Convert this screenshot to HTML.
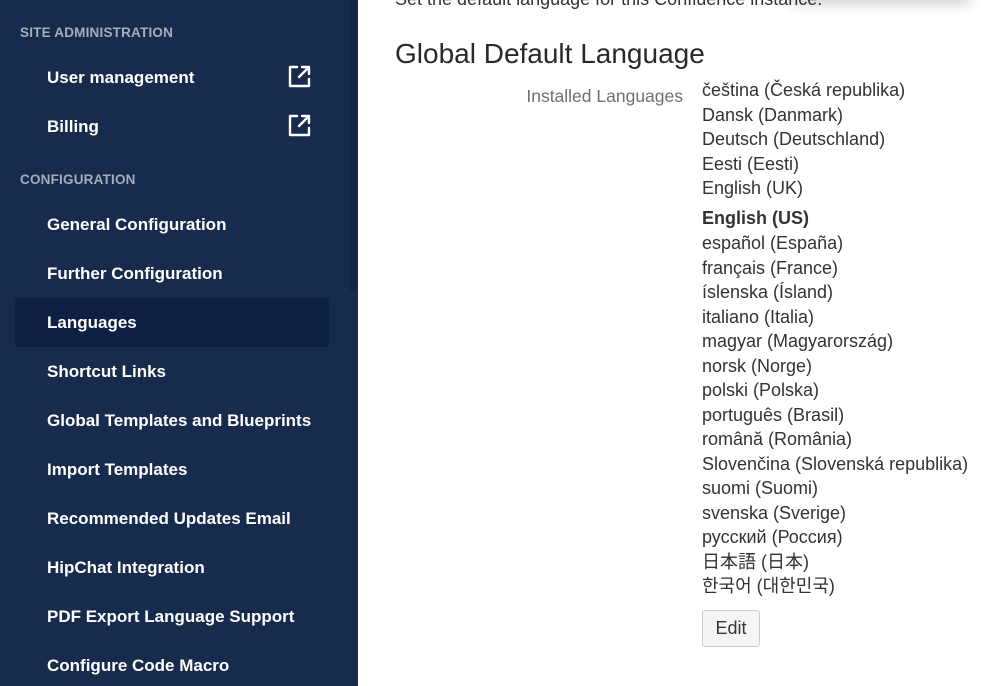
<!DOCTYPE html>
<html><head><meta charset="utf-8"><style>
*{margin:0;padding:0;box-sizing:border-box}
body{width:999px;height:686px;overflow:hidden;background:#fff;font-family:"Liberation Sans","Noto Sans CJK KR",sans-serif;position:relative}
#side{position:absolute;left:0;top:0;width:358px;height:686px;background:#172b4d}
.thumb{position:absolute;left:349px;top:-5px;width:8px;height:297px;background:#132648;border-radius:4px}
.h{position:absolute;left:20px;font-size:13.5px;font-weight:bold;color:#a5adba;letter-spacing:.2px;line-height:16px}
.it{position:absolute;left:47px;font-size:17px;font-weight:bold;color:#fff;line-height:20px;transform:translateY(-9px)}
.sel{position:absolute;left:15px;top:298px;width:314px;height:49px;background:#0e1f44;border-radius:3px}
.ext{position:absolute;left:288px;width:23px;height:23px}
.main{position:absolute;left:395px;color:#333}
.lang{position:absolute;left:702px;font-size:18px;color:#333;line-height:20px;white-space:nowrap}
</style></head><body>
<div id="side">
<div class="thumb"></div>
<div class="sel"></div>
<div class="h" style="top:25px">SITE ADMINISTRATION</div>
<div class="it" style="top:77px">User management</div>
<svg class="ext" style="top:65px" viewBox="0 0 23 23" fill="none" stroke="#fff" stroke-width="2.4" stroke-linecap="round" stroke-linejoin="round"><path d="M9 2H2v19h19v-7"/><path d="M11 12L20 3M14 2h7v7"/></svg>
<div class="it" style="top:126px">Billing</div>
<svg class="ext" style="top:114px" viewBox="0 0 23 23" fill="none" stroke="#fff" stroke-width="2.4" stroke-linecap="round" stroke-linejoin="round"><path d="M9 2H2v19h19v-7"/><path d="M11 12L20 3M14 2h7v7"/></svg>
<div class="h" style="top:172px">CONFIGURATION</div>
<div class="it" style="top:224px">General Configuration</div>
<div class="it" style="top:273px">Further Configuration</div>
<div class="it" style="top:322px">Languages</div>
<div class="it" style="top:371px">Shortcut Links</div>
<div class="it" style="top:420px">Global Templates and Blueprints</div>
<div class="it" style="top:469px">Import Templates</div>
<div class="it" style="top:518px">Recommended Updates Email</div>
<div class="it" style="top:567px">HipChat Integration</div>
<div class="it" style="top:616px">PDF Export Language Support</div>
<div class="it" style="top:665px">Configure Code Macro</div>
</div>
<div style="position:absolute;left:790px;top:-40px;width:180px;height:40px;background:#fff;box-shadow:0 4px 14px rgba(0,0,0,.18)"></div>
<div class="main" style="top:-11px;font-size:18px;line-height:20px">Set the default language for this Confluence instance.</div>
<div class="main" style="top:37px;font-size:28px;line-height:34px;color:#292929">Global Default Language</div>
<div style="position:absolute;right:316px;top:86px;font-size:17.5px;color:#707070;line-height:20px">Installed Languages</div>
<div class="lang" style="top:80px">čeština (Česká republika)</div>
<div class="lang" style="top:105px">Dansk (Danmark)</div>
<div class="lang" style="top:129px">Deutsch (Deutschland)</div>
<div class="lang" style="top:154px">Eesti (Eesti)</div>
<div class="lang" style="top:178px">English (UK)</div>
<div class="lang" style="top:208px;font-weight:bold">English (US)</div>
<div class="lang" style="top:233px">español (España)</div>
<div class="lang" style="top:258px">français (France)</div>
<div class="lang" style="top:282px">íslenska (Ísland)</div>
<div class="lang" style="top:307px">italiano (Italia)</div>
<div class="lang" style="top:331px">magyar (Magyarország)</div>
<div class="lang" style="top:356px">norsk (Norge)</div>
<div class="lang" style="top:380px">polski (Polska)</div>
<div class="lang" style="top:405px">português (Brasil)</div>
<div class="lang" style="top:429px">română (România)</div>
<div class="lang" style="top:454px">Slovenčina (Slovenská republika)</div>
<div class="lang" style="top:478px">suomi (Suomi)</div>
<div class="lang" style="top:503px">svenska (Sverige)</div>
<div class="lang" style="top:527px">русский (Россия)</div>
<div class="lang" style="top:552px;font-family:'Liberation Sans','Noto Sans CJK JP',sans-serif">日本語 (日本)</div>
<div class="lang" style="top:576px">한국어 (대한민국)</div>
<div style="position:absolute;left:702px;top:610px;width:58px;height:37px;border:1px solid #ccc;border-radius:3px;background:#f5f5f5;font-size:18px;color:#333;text-align:center;line-height:35px">Edit</div>
</body></html>
